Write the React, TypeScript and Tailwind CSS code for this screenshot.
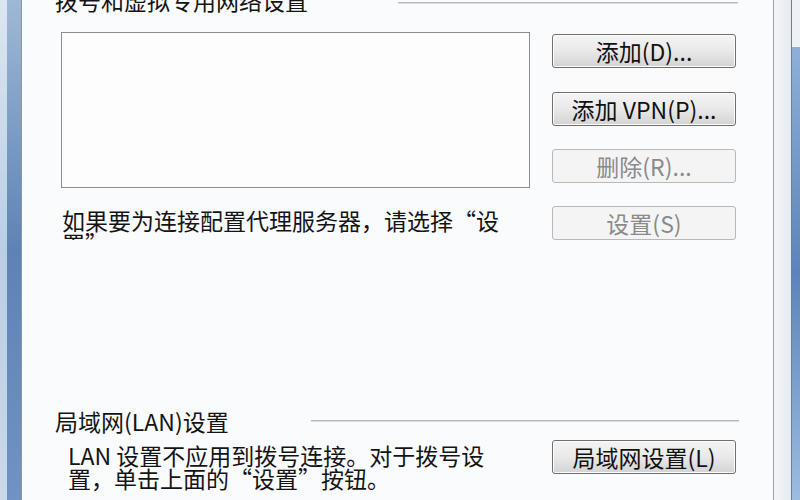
import React from 'react';

const font = { fontFamily: '"Noto Sans CJK SC", "Noto Sans", sans-serif' };

const WinButton: React.FC<{ label: string; disabled?: boolean; className?: string }> = ({ label, disabled, className = '' }) => (
  <div
    className={`w-[184px] h-[34px] rounded-[3px] border flex items-center justify-center text-[23px] leading-[23px] ${
      disabled
        ? 'border-[#b5b9bd] bg-[#f4f4f4] text-[#8a8a8a]'
        : 'border-[#6f6f6f] bg-gradient-to-b from-[#f4f4f4] via-[#e9e9e9] to-[#d3d3d3] text-[#111] shadow-[inset_0_0_0_1px_#fcfcfc]'
    } ${className}`}
  >
    {label}
  </div>
);

export default function App() {
  return (
    <div className="w-[800px] h-[500px] overflow-hidden flex bg-[#fafbfc]" style={font}>
      {/* left window frame */}
      <div className="w-[7px] h-full bg-gradient-to-b from-[#dce6f0] via-[#b9cfe6] to-[#c8d9ea]" />
      <div className="w-[14px] h-full bg-gradient-to-b from-[#9fb8d6] via-[#5d83b5] to-[#6f93c2]" />
      <div className="w-px h-full bg-[#8b96a2]" />

      {/* dialog body */}
      <main className="w-[751px] h-full flex flex-col text-[#141414]">
        <div className="-mt-[11px] h-[23px] flex pl-[33px]">
          <span className="text-[23px] leading-[23px] whitespace-nowrap">拨号和虚拟专用网络设置</span>
          <div className="ml-[90px] mt-[13px] w-[340px] h-[2px] bg-gradient-to-b from-[#a8a8a8] to-[#eeeeee]" />
        </div>

        <div className="mt-[20px] flex pl-[39px]">
          <div className="flex flex-col">
            <div className="w-[469px] h-[156px] border border-[#8d8d8d] bg-[#fdfdfd]" />
            <div className="mt-[21px] h-[31px] overflow-hidden pl-px text-[23px] leading-[23px] whitespace-nowrap">
              <div>如果要为连接配置代理服务器，请选择“设</div>
              <div>置”。</div>
            </div>
          </div>
          <div className="ml-[22px] mt-[2px] flex flex-col">
            <WinButton label="添加(D)..." />
            <WinButton label="添加 VPN(P)..." className="mt-[24px]" />
            <WinButton label="删除(R)..." disabled className="mt-[23px]" />
            <WinButton label="设置(S)" disabled className="mt-[23px]" />
          </div>
        </div>

        <div className="mt-[170px] h-[23px] flex pl-[33px]">
          <span className="text-[23px] leading-[23px] whitespace-nowrap">局域网(LAN)设置</span>
          <div className="ml-[82px] mt-[10px] w-[428px] h-[2px] bg-gradient-to-b from-[#a8a8a8] to-[#eeeeee]" />
        </div>

        <div className="flex pl-[46px]">
          <div className="w-[484px] mt-[11px] text-[23px] leading-[23px] whitespace-nowrap">
            <div>LAN 设置不应用到拨号连接。对于拨号设</div>
            <div>置，单击上面的“设置”按钮。</div>
          </div>
          <WinButton label="局域网设置(L)" className="mt-[7px] w-[183px]" />
        </div>
      </main>

      {/* right window frame */}
      <div className="w-px h-full bg-[#9aa3ad]" />
      <div className="w-[17px] h-full bg-gradient-to-r from-[#f3f5f8] to-[#e6ebf1]" />
      <div className="w-px h-full bg-[#6f7e8e]" />
      <div className="flex-1 h-full flex flex-col">
        <div className="h-[47px] bg-[#eef2f6]" />
        <div className="flex-1 bg-gradient-to-b from-[#8eb0d8] via-[#5c84b8] to-[#9dbde0]" />
      </div>
    </div>
  );
}
